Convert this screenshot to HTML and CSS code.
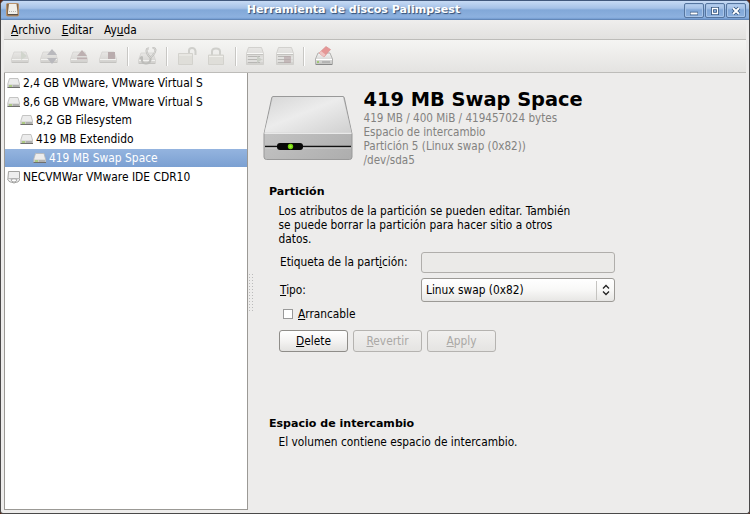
FILE: index.html
```html
<!DOCTYPE html>
<html lang="es">
<head>
<meta charset="utf-8">
<title>Herramienta de discos Palimpsest</title>
<link rel="stylesheet" href="styles.css">
</head>
<body>
<svg class="defs" width="0" height="0">
  <defs>
    <linearGradient id="metal" x1="0" y1="0" x2="0" y2="1"><stop offset="0" stop-color="#f4f4f4"/><stop offset="1" stop-color="#c4c4c2"/></linearGradient>
    <linearGradient id="top" x1="0" y1="0" x2="1" y2="1"><stop offset="0" stop-color="#d6d6d6"/><stop offset=".45" stop-color="#ececec"/><stop offset="1" stop-color="#d0d0d0"/></linearGradient>
    <linearGradient id="front" x1="0" y1="0" x2="1" y2="1"><stop offset="0" stop-color="#cdcdcd"/><stop offset="1" stop-color="#adadad"/></linearGradient>
    <linearGradient id="shell" x1="0" y1="0" x2="0" y2="1"><stop offset="0" stop-color="#e8e7e5"/><stop offset="1" stop-color="#d2d1ce"/></linearGradient>
    <symbol id="disk" viewBox="0 0 14 12">
      <path d="M2.500 1.500h8.500L12.500 7v3.500H.8V7z" fill="#ececec" stroke="#b8b8b6" stroke-width=".8"/>
      <path d="M1 7.500h11.500v3H1z" fill="#c9c9c7"/>
      <path d="M.5 10.500h12.500" stroke="#70706e"/>
      <path d="M2 9h3" stroke="#8fc93e"/><path d="M6 9h6" stroke="#999"/>
    </symbol>
    <symbol id="drive" viewBox="0 0 20 18">
      <path d="M4 4h12l2.500 7v3.500h-17V11z" fill="url(#shell)" stroke="#d4d3d0" stroke-width=".8"/>
      <path d="M2 11.500h16" stroke="#f1f1ef"/><path d="M2 14.500h16" stroke="#c4c3c0"/>
    </symbol>
    <symbol id="raid" viewBox="0 0 20 20">
      <path d="M3.500 1.500h13l2 6v11h-17v-11z" fill="url(#shell)" stroke="#cfcecb" stroke-width=".9"/>
      <path d="M2 7.500h16" stroke="#f8f8f6"/>
      <path d="M2 8.500h16" stroke="#c4c3c0"/>
      <path d="M3 10.500h12M3 13.500h12M3 16.500h12" stroke="#b8b7b4"/>
      <path d="M2 12h16M2 15h16" stroke="#e9e9e7"/>
    </symbol>
  </defs>
</svg>
<div class="window">
  <header class="titlebar">
    <svg class="app-icon" width="14" height="14" viewBox="0 0 14 14"><rect x=".5" y=".5" width="12" height="12.500" rx="1" fill="#86694c" stroke="#b8936d"/><path d="M3 1h7.500l1 8v3H2V9z" fill="#f0eee9"/><path d="M3 8.500h8" stroke="#b7b5b0" stroke-dasharray="1 1"/><path d="M2 11.500h10" stroke="#55504a"/></svg>
    <h1>Herramienta de discos Palimpsest</h1>
    <div class="controls">
      <span><svg width="10" height="10"><path d="M1 7.500h8" stroke="#33557f" stroke-width="3.600"/><path d="M1.500 7.500h7" stroke="#fff" stroke-width="2"/></svg></span>
      <span><svg width="10" height="10"><path d="M2.500 2.500h5v5h-5z" fill="none" stroke="#33557f" stroke-width="3"/><path d="M2.500 2.500h5v5h-5z" fill="none" stroke="#fff" stroke-width="1.300"/></svg></span>
      <span><svg width="10" height="10"><path d="M2 2l6 6M8 2L2 8" stroke="#33557f" stroke-width="3.600"/><path d="M2 2l6 6M8 2L2 8" stroke="#fff" stroke-width="1.900"/></svg></span>
    </div>
  </header>
  <nav class="menubar"><span><u>A</u>rchivo</span><span><u>E</u>ditar</span><span>Ay<u>u</u>da</span></nav>
  <div class="toolbar">
    <svg width="20" height="20"><use href="#drive" y="2" width="20" height="18"/><path d="M11 5l6 5-6 4z" fill="#d1d5cd"/></svg>
    <svg width="20" height="20"><use href="#drive" y="2" width="20" height="18"/><path d="M8 9l5-6 5 6zM8 12h10l-5 6z" fill="#b9b9bd"/></svg>
    <svg width="20" height="20"><use href="#drive" y="2" width="20" height="18"/><path d="M8 10l5-6 5 6zM8 11.500h10v2H8z" fill="#bdb0b1"/></svg>
    <svg width="20" height="20"><use href="#drive" y="2" width="20" height="18"/><path d="M10 6h7v7h-7z" fill="#b9acad"/></svg>
    <i class="sep"></i>
    <svg width="20" height="20"><use href="#drive" y="3" width="20" height="18"/><path d="M12 2.500Q9.500 2 9.500 5q.5 4 4 6.500Q18 8 18.500 4 18 1.500 15.500 2M13.500 11v3q-1 4-5 3.500T5 13t-2 0" fill="none" stroke="#bdbdba" stroke-width="2"/><path d="M12 2.500Q9.500 2 9.500 5q.5 4 4 6.500Q18 8 18.500 4 18 1.500 15.500 2" fill="none" stroke="#deddda" stroke-width=".8"/></svg>
    <i class="sep"></i>
    <svg width="20" height="20"><path d="M12 8V4.500Q12 2 15 2t3.500 3v4" fill="none" stroke="#cfcfcb" stroke-width="2"/><path d="M1.500 7.500h14v11h-14z" fill="#dfded9" stroke="#d3d2cd"/><path d="M2 9h13" stroke="#f0efeb"/></svg>
    <svg width="20" height="20"><path d="M6 9V5.500Q6 2.500 10 2.500t4 3V9" fill="none" stroke="#cfcfcb" stroke-width="2"/><path d="M2.500 9h15v9.500h-15z" fill="#dfded9" stroke="#d3d2cd"/><path d="M3 10.500h14" stroke="#f0efeb"/></svg>
    <i class="sep"></i>
    <svg width="20" height="20"><use href="#raid" width="20" height="20"/><path d="M12 10l5 3.500-5 3.500z" fill="#cacec6"/></svg>
    <svg width="20" height="20"><use href="#raid" width="20" height="20"/><path d="M9 10h7v7H9z" fill="#b8a8a9" opacity=".7"/></svg>
    <i class="sep"></i>
    <svg width="20" height="20"><path d="M4 7h12l2.500 6v5.500h-17V13z" fill="url(#metal)" stroke="#b0b0ae"/><path d="M2 13.500h16" stroke="#fff"/><path d="M2 18.500h16" stroke="#888"/><path d="M8 16h8" stroke="#999"/><path d="M3 16h2" stroke="#70c020"/><path d="M5 7l7-6.500 4.500 3L10 11z" fill="#e59796" stroke="#d99090" stroke-width=".7"/><path d="M5 7l2-2 4.500 3.500L10 11z" fill="#efc4c2"/></svg>
  </div>
  <div class="content">
    <ul class="tree">
      <li><svg width="14" height="12"><use href="#disk"/></svg>2,4 GB VMware, VMware Virtual S</li>
      <li><svg width="14" height="12"><use href="#disk"/></svg>8,6 GB VMware, VMware Virtual S</li>
      <li class="level1"><svg width="14" height="12"><use href="#disk"/></svg>8,2 GB Filesystem</li>
      <li class="level1"><svg width="14" height="12"><use href="#disk"/></svg>419 MB Extendido</li>
      <li class="level2 selected"><svg width="14" height="12"><use href="#disk"/></svg>419 MB Swap Space</li>
      <li><svg width="14" height="14"><path d="M1.500 1.500h11v8.500L11 12H10q-3 2-6 0H3L.8 10z" fill="#eee" stroke="#a2a2a0"/><path d="M1 8.500h12" stroke="#bbb"/><path d="M4 9.500q3-1.500 6 0-.5 2.500-3 2.500t-3-2.500z" fill="#fff" stroke="#999" stroke-width=".8"/></svg>NECVMWar VMware IDE CDR10</li>
    </ul>
    <div class="splitter"><i></i></div>
    <main>
      <section class="summary">
        <svg width="90" height="66" viewBox="0 0 90 66">
          <path d="M10 1.500h70q1 0 1.300 1.500L89 39v23q0 2.500-2.500 2.500h-83Q1 64.500 1 62V39L8.700 3Q9 1.500 10 1.500z" fill="url(#front)" stroke="#999"/>
          <path d="M10 2h70l8.500 35.500h-87z" fill="url(#top)"/>
          <path d="M1.500 38.300h87" stroke="#e9e9e9" stroke-width="1.500"/>
          <path d="M2 51.500h86" stroke="#111" stroke-width="1.600"/><path d="M2 53h86" stroke="#d8d8d8" stroke-width=".8"/>
          <rect x="14" y="48" width="26" height="7" rx="3" fill="#080808"/><circle cx="27.500" cy="51.500" r="2.700" fill="#71cf0c"/><circle cx="27.500" cy="51.500" r="1.200" fill="#a5f33c"/>
        </svg>
        <div class="details"><h2>419 MB Swap Space</h2>
          <p>419 MB / 400 MiB / 419457024 bytes</p><p>Espacio de intercambio</p><p>Partición 5 (Linux swap (0x82))</p><p>/dev/sda5</p></div>
      </section>
      <section class="partition">
        <h3>Partición</h3>
        <p class="description">Los atributos de la partición se pueden editar. También<br>se puede borrar la partición para hacer sitio a otros<br>datos.</p>
        <div class="form">
          <span>Etiqueta de la part<u>i</u>ción:</span><div class="entry"></div>
          <span><u>T</u>ipo:</span><div class="select"><span>Linux swap (0x82)</span><i><svg width="8" height="12"><path d="M1 4.500l3-3 3 3M1 7.500l3 3 3-3" fill="none" stroke="#222" stroke-width="1.300"/></svg></i></div>
        </div>
        <div class="check"><i></i><span><u>A</u>rrancable</span></div>
        <div class="buttons"><div class="button"><span><u>D</u>elete</span></div><div class="button off"><span><u>R</u>evertir</span></div><div class="button off"><span><u>A</u>pply</span></div></div>
      </section>
      <section class="swap"><h3>Espacio de intercambio</h3><p class="description">El volumen contiene espacio de intercambio.</p></section>
    </main>
  </div>
</div>
</body>
</html>
```
FILE: styles.css
```css
* { box-sizing: border-box; margin: 0; padding: 0; }
body { width: 750px; height: 514px; overflow: hidden; background: #5a2410; font: 11.800px/14px "DejaVu Sans Condensed", "DejaVu Sans", sans-serif; font-stretch: condensed; color: #000; }
svg { display: block; flex: none; }
.defs { position: absolute; }
u { text-decoration-thickness: 1px; text-underline-offset: 1px; }
h1, h2, h3 { font-family: "DejaVu Sans", sans-serif; font-stretch: normal; }
.window { width: 750px; height: 514px; border: 1px solid #4a4949; border-top-color: #41587c; border-radius: 5px 5px 3px 3px; background: #edeceb; overflow: hidden; display: flex; flex-direction: column; }
.titlebar { height: 19px; flex: none; display: flex; align-items: center; padding: 0 3px 0 5px; border-bottom: 1px solid #6488b8; background: linear-gradient(#c6daf4 0, #a6c2e7 40%, #82a8d8 50%, #8db1df 90%, #729bd0); }
.titlebar h1 { flex: 1; text-align: center; padding-left: 3px; font-size: 11.100px; line-height: 16px; color: #fff; text-shadow: 1px 1px 1px #304b70; }
.controls { display: flex; gap: 1px; padding-top: 1px; }
.controls span { width: 20px; height: 15px; border: 1px solid #55759f; border-radius: 2px; display: flex; justify-content: center; align-items: center; box-shadow: inset 0 0 0 1px #a9c5e8; }
.menubar { height: 20px; flex: none; margin: 0 3px; display: flex; gap: 11px; align-items: center; padding: 0 0 0 7px; background: linear-gradient(#efeeed, #e2e1df); border-bottom: 1px solid #bdbcb9; }
.toolbar { height: 33px; flex: none; margin: 0 3px; display: flex; align-items: center; gap: 9.400px; padding-left: 6px; background: linear-gradient(#f5f5f3, #e4e3e1); border-bottom: 1px solid #bdbcb9; }
.sep { width: 2px; height: 19px; margin: 0 -0.800px; border-left: 1px solid #c8c7c4; background: #fff; }
.content { flex: 1; display: flex; min-height: 0; padding: 0 2px 3px 3px; }
.tree { width: 244px; padding-top: 0.500px; border: 1px solid #9b9995; border-top: 0; background: #fff; list-style: none; font-size: 11.900px; }
.tree li { height: 18.750px; display: flex; align-items: center; gap: 3px; padding-left: 1.500px; white-space: nowrap; }
.tree li svg { margin-right: -0.500px; }
.tree .level1 { padding-left: 14.500px; }
.tree .level2 { padding-left: 27.500px; }
.tree .selected { color: #fff; background: linear-gradient(#94b4df, #7ba0d2); }
.splitter { width: 5px; display: flex; align-items: center; }
.splitter i { width: 5px; height: 38px; background: radial-gradient(circle, #bbb 0.700px, transparent 1px) 0 0 / 3px 3px; }
main { flex: 1; padding: 15px 0 0 10px; }
.summary { display: flex; gap: 10.500px; height: 97px; }
.summary > svg { margin-top: 7px; }
.details { color: #838280; white-space: nowrap; font-size: 11.600px; }
.details h2 { font-size: 19.400px; line-height: 23px; letter-spacing: 0; color: #000; }
.details p { line-height: 14px; }
h3 { font-size: 11.050px; line-height: 14px; color: #000; }
.partition, .swap { padding-left: 6px; }
.description { padding: 5px 0 0 9.500px; }
.form { display: grid; grid-template-columns: 141px 194px; grid-template-rows: 21px 24px; row-gap: 5px; align-items: center; padding: 6px 0 0 11px; }
.form > span { padding-bottom: 1px; }
.entry { height: 21px; border: 1px solid #b0aeab; border-radius: 3px; background: #ebeae8; }
.select { height: 24px; border: 1px solid #9c9a96; border-radius: 3px; background: linear-gradient(#fff, #f8f8f7 50%, #e7e6e4); display: flex; align-items: center; padding-left: 4px; }
.select > span { padding-bottom: 1px; }
.select i { margin-left: auto; width: 18px; height: 19px; border-left: 1px solid #c5c4c1; display: flex; align-items: center; justify-content: center; }
.check { display: flex; gap: 5px; align-items: center; height: 14px; margin: 5px 0 9px 14px; }
.check i { width: 10px; height: 10px; border: 1px solid #999; background: #fff; }
.buttons { display: flex; gap: 5px; padding-left: 10px; }
.button { width: 69px; height: 22px; border: 1px solid #8f8d89; border-radius: 3px; display: flex; align-items: center; justify-content: center; background: linear-gradient(#fff, #f4f3f2 50%, #e3e2e0); }
.button.off { border-color: #b5b3b0; color: #aaa8a5; background: linear-gradient(#f1f0ef, #e5e4e2); }
.swap { padding-top: 65px; }
.swap .description { padding-top: 4px; }
```
